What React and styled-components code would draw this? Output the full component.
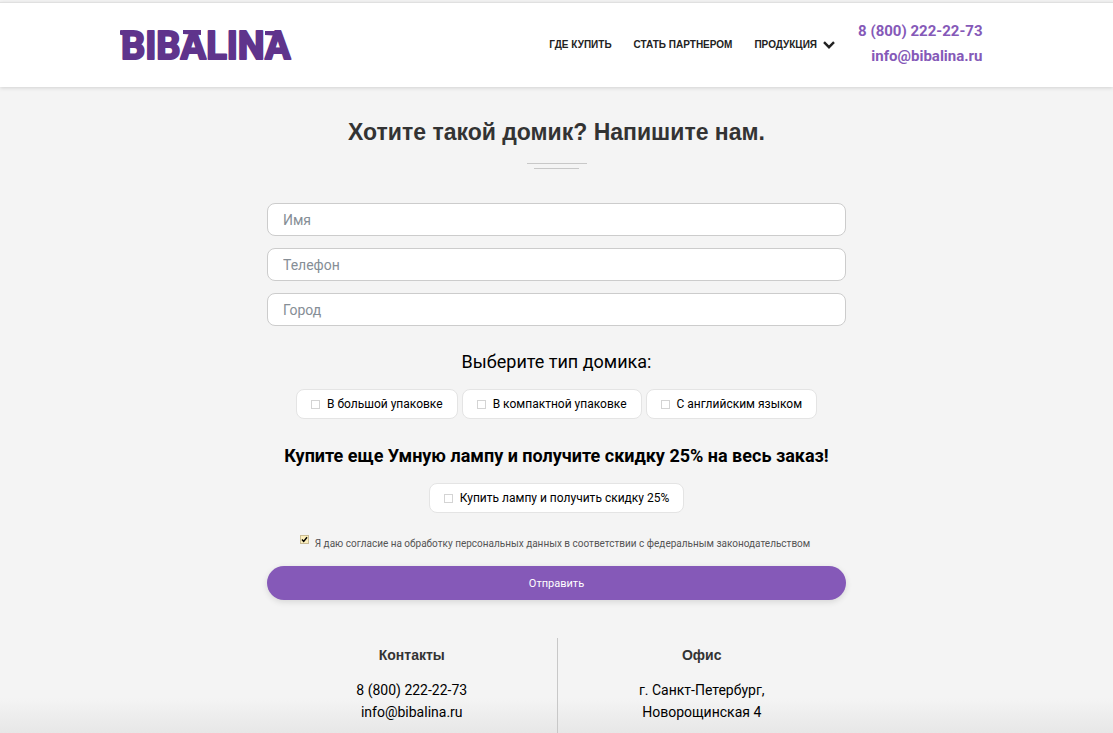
import React from "react";
import styled, { createGlobalStyle } from "styled-components";

const GlobalStyle = createGlobalStyle`
  *, *::before, *::after { box-sizing: border-box; }
  body {
    margin: 0;
    background: #f4f4f4;
    color: #000;
    font-family: Roboto, sans-serif;
    font-size: 14px;
  }
  a { color: inherit; text-decoration: none; }
  h1, h2, h3, p { margin: 0; }
`;

const Page = styled.div`
  min-height: 100vh;
  padding-top: 2px;
`;

const Header = styled.header`
  border-top: 1px solid #e0e0e0;
  background: #fff;
  box-shadow: 0 1px 4px rgba(0, 0, 0, 0.14);
`;

const HeaderInner = styled.div`
  display: flex;
  align-items: center;
  max-width: 874px;
  height: 84px;
  margin: 0 auto;
  padding-right: 11px;
`;

const LogoLink = styled.a`
  display: block;
  margin-right: auto;
  svg { display: block; }
`;

const LogoText = styled.text`
  fill: #5f348c;
  stroke: #5f348c;
  stroke-width: 2px;
  stroke-linejoin: round;
  font-family: Roboto, sans-serif;
  font-size: 38px;
  font-weight: 700;
`;

const Nav = styled.nav`
  display: flex;
  align-items: center;
  gap: 22px;
  margin-right: 23px;
  font-family: "Liberation Sans", sans-serif;
  font-size: 10px;
  font-weight: 700;
  line-height: 16px;
  color: #222;
`;

const NavLink = styled.a`
  display: flex;
  align-items: center;
  gap: 6px;
  white-space: nowrap;
`;

const HeaderContacts = styled.address`
  display: flex;
  flex-direction: column;
  padding-bottom: 2px;
  color: #8559b8;
  font-size: 15px;
  font-style: normal;
  font-weight: 700;
  line-height: 25px;
  text-align: right;
`;

const Main = styled.main`
  padding: 31px 16px 0;
  text-align: center;
`;

const Title = styled.h1`
  font-family: "Liberation Sans", sans-serif;
  font-size: 23px;
  line-height: 28px;
  color: #333;
`;

const Divider = styled.div`
  display: flex;
  flex-direction: column;
  align-items: center;
  gap: 4px;
  margin: 17px 0 34px;
`;

const Rule = styled.span`
  width: ${(p) => p.$width}px;
  height: 1px;
  background: #c8c8c8;
`;

const Form = styled.form`
  display: flex;
  flex-direction: column;
  max-width: 579px;
  margin: 0 auto;
`;

const Fields = styled.div`
  display: grid;
  gap: 12px;
`;

const Field = styled.input`
  width: 100%;
  height: 33px;
  padding: 1px 15px 0;
  border: 1px solid #ccc;
  border-radius: 8px;
  background: #fff;
  color: #000;
  font: 14px Roboto, sans-serif;
  &::placeholder { color: #868e96; opacity: 1; }
`;

const Question = styled.h2`
  margin-top: ${(p) => (p.$strong ? 24 : 23)}px;
  font-size: 18px;
  font-weight: ${(p) => (p.$strong ? 700 : 400)};
  line-height: 26px;
`;

const Options = styled.div`
  display: flex;
  flex-wrap: wrap;
  justify-content: center;
  gap: 4px;
  margin-top: 14px;
`;

const Option = styled.label`
  display: flex;
  align-items: center;
  gap: 7px;
  height: 30px;
  padding: 0 14px;
  border: 1px solid #e4e4e4;
  border-radius: 8px;
  background: #fff;
  font-size: 12px;
  white-space: nowrap;
`;

const Checkbox = styled.input.attrs({ type: "checkbox" })`
  appearance: none;
  flex: none;
  width: 9px;
  height: 9px;
  margin: 0;
  border: 1px solid #d4d4d4;
  background: #fff;
  &:checked {
    border-color: #c9bb94;
    background: #fbeebc url("data:image/svg+xml,%3Csvg xmlns='http://www.w3.org/2000/svg' viewBox='0 0 7 7'%3E%3Cpath d='M1 3.5 2.7 5.4 6 1.3' fill='none' stroke='%23000' stroke-width='1.5'/%3E%3C/svg%3E") center / 7px 7px;
  }
`;

const Consent = styled.label`
  display: flex;
  justify-content: center;
  align-items: flex-start;
  gap: 6px;
  margin-top: 22px;
  padding-right: 3px;
  color: #555;
  font-size: 10px;
  line-height: 18px;
`;

const Submit = styled.button`
  height: 34px;
  margin-top: 13px;
  border: 0;
  border-radius: 17px;
  background: #8559b8;
  box-shadow: 0 2px 6px rgba(0, 0, 0, 0.12);
  color: #fff;
  font: 11px Roboto, sans-serif;
`;

const Footer = styled.footer`
  background: linear-gradient(#f4f4f4 60px, #e7e7e7 95px);
  margin-top: 38px;
  text-align: center;
`;

const FooterColumns = styled.div`
  display: grid;
  grid-template-columns: 1fr 1fr;
  max-width: 579px;
  margin: 0 auto;
`;

const FooterColumn = styled.section`
  min-height: 95px;
  padding-top: 7px;
  font-size: 14px;
  line-height: 22px;
  & + & { border-left: 1px solid #c8c8c8; }
  h3 {
    margin-bottom: 14px;
    color: #333;
    font: 700 14px/20px "Liberation Sans", sans-serif;
  }
  a { display: block; }
`;

function Logo() {
  return (
    <svg width="172" height="46" viewBox="0 0 172 46" role="img" aria-label="Bibalina">
      <LogoText x="1" y="37">BIBALINA</LogoText>
      <g fill="#5f348c">
        <path d="M0 9Q0 8 1 8L12 9V14L1 13Q0 13 0 12Z" />
        <path d="M63 8H81V13L63 12Z" />
        <path d="M145 9H161V14L145 13Z" />
      </g>
    </svg>
  );
}

function Chevron() {
  return (
    <svg width="12" height="8" viewBox="0 0 12 8" aria-hidden="true">
      <path d="M1 1.2 6 6.2 11 1.2" fill="none" stroke="#222" strokeWidth="2.4" />
    </svg>
  );
}

const FIELDS = [
  { name: "name", label: "Имя", type: "text" },
  { name: "phone", label: "Телефон", type: "tel" },
  { name: "city", label: "Город", type: "text" },
];

const HOUSES = ["В большой упаковке", "В компактной упаковке", "С английским языком"];

export default function App() {
  return (
    <Page>
      <GlobalStyle />
      <Header>
        <HeaderInner>
          <LogoLink href="#"><Logo /></LogoLink>
          <Nav>
            <NavLink href="#buy">ГДЕ КУПИТЬ</NavLink>
            <NavLink href="#partner">СТАТЬ ПАРТНЕРОМ</NavLink>
            <NavLink href="#products">ПРОДУКЦИЯ <Chevron /></NavLink>
          </Nav>
          <HeaderContacts>
            <a href="tel:88002222273">8 (800) 222-22-73</a>
            <a href="mailto:info@bibalina.ru">info@bibalina.ru</a>
          </HeaderContacts>
        </HeaderInner>
      </Header>
      <Main>
        <Title>Хотите такой домик? Напишите нам.</Title>
        <Divider>
          <Rule $width={60} />
          <Rule $width={45} />
        </Divider>
        <Form onSubmit={(e) => e.preventDefault()}>
          <Fields>
            {FIELDS.map((f) => (
              <Field key={f.name} name={f.name} type={f.type} placeholder={f.label} aria-label={f.label} />
            ))}
          </Fields>
          <Question>Выберите тип домика:</Question>
          <Options>
            {HOUSES.map((house) => (
              <Option key={house}><Checkbox name="house" value={house} />{house}</Option>
            ))}
          </Options>
          <Question $strong>Купите еще Умную лампу и получите скидку 25% на весь заказ!</Question>
          <Options>
            <Option><Checkbox name="lamp" />Купить лампу и получить скидку 25%</Option>
          </Options>
          <Consent>
            <Checkbox name="consent" defaultChecked />
            Я даю согласие на обработку персональных данных в соответствии с федеральным законодательством
          </Consent>
          <Submit type="submit">Отправить</Submit>
        </Form>
      </Main>
      <Footer>
        <FooterColumns>
          <FooterColumn>
            <h3>Контакты</h3>
            <a href="tel:88002222273">8 (800) 222-22-73</a>
            <a href="mailto:info@bibalina.ru">info@bibalina.ru</a>
          </FooterColumn>
          <FooterColumn>
            <h3>Офис</h3>
            <p>г. Санкт-Петербург,<br />Новорощинская 4</p>
          </FooterColumn>
        </FooterColumns>
      </Footer>
    </Page>
  );
}
